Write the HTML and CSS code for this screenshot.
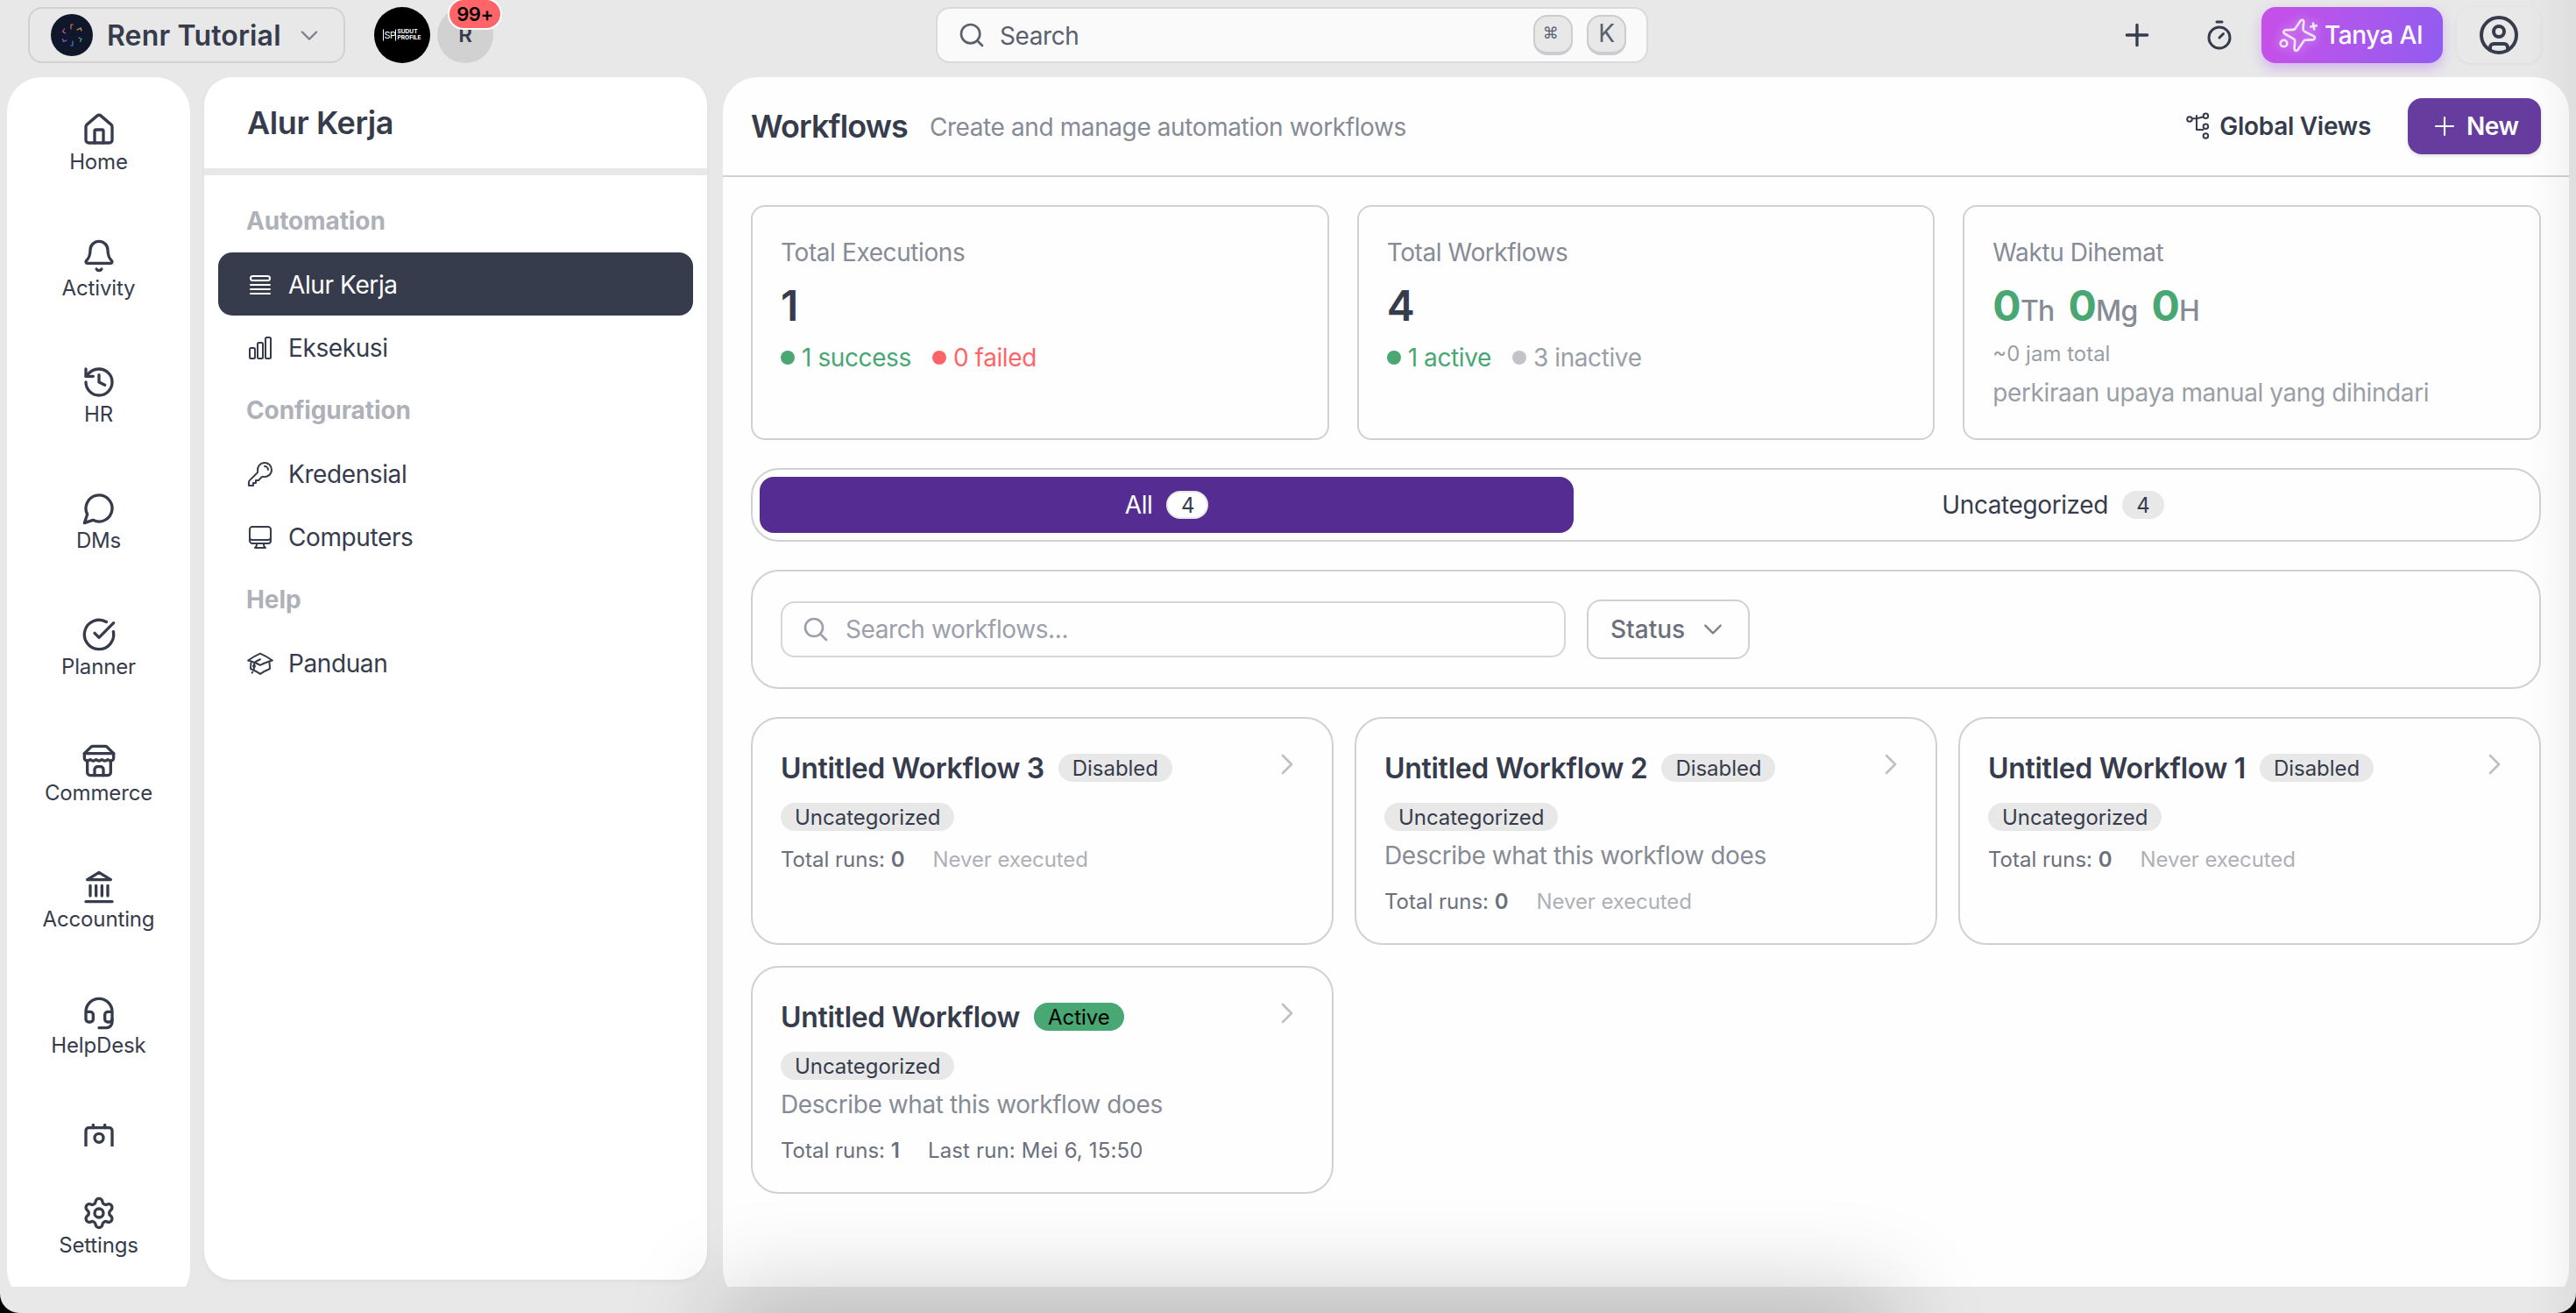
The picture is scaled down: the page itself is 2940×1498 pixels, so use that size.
FILE: index.html
```html
<!DOCTYPE html>
<html lang="id">
  <head>
    <meta charset="utf-8" />
    <meta name="viewport" content="width=device-width, initial-scale=1" />
    <title>Workflows</title>
    <link rel="stylesheet" href="styles.css" />
  </head>
  <body>
    <div class="app">
      <header class="topbar">
        <div class="topbar-left">
          <button type="button" class="workspace">
            <svg class="workspace-logo" viewBox="0 0 48 48">
              <circle cx="24" cy="24" r="24" fill="#10172a" stroke="none" />
              <g fill="none" stroke-width="1.2">
                <path d="M23 17v-5h2.500" stroke="#e0695a" />
                <path d="M30 18l4-2 1 3" stroke="#d9a93c" />
                <path d="M32 27l3 1.500-1.500 3" stroke="#4fae84" />
                <path d="M25 31v5h-2.500" stroke="#4c7fd0" />
                <path d="M18 30l-3.500 1.500-1-3" stroke="#7d68cf" />
                <path d="M16.500 22l-3-2 2-3" stroke="#c65a9b" />
              </g>
            </svg>
            <span class="workspace-name">Renr Tutorial</span>
            <svg class="chevron" viewBox="0 0 24 24"><path d="m5 9 7 7 7-7" /></svg>
          </button>
          <div class="avatars">
            <div class="avatar avatar-dark">
              <span class="sp-mark">SP</span>
              <span class="sp-text">SUDUT<br />PROFILE</span>
            </div>
            <div class="avatar avatar-grey">R<span class="notif">99+</span></div>
          </div>
        </div>

        <div class="global-search">
          <svg class="icon-32" viewBox="0 0 24 24"><circle cx="11" cy="11" r="8" /><path d="m21 21-4.300-4.300" /></svg>
          <span class="global-search-text">Search</span>
          <kbd class="key key-cmd">⌘</kbd>
          <kbd class="key">K</kbd>
        </div>

        <div class="topbar-right">
          <svg class="icon-40" viewBox="0 0 24 24"><path d="M5 12h14M12 5v14" /></svg>
          <svg class="icon-36 timer" viewBox="0 0 24 24"><path d="M10 2h4M12 14l3-3" /><circle cx="12" cy="14" r="8" /></svg>
          <button type="button" class="ask-ai">
            <svg class="sparkle" viewBox="0 0 44 38">
              <path d="M24 3.500c1-2.600 4.400-2.200 4.200.6l-.7 8c0 1 .5 2 1.500 2.700l10.500 5.400c2.300 1.300 1.600 4.100-1 4.200l-8 .2c-1.200 0-2 .6-2.500 1.600l-6.500 9.500c-1.500 2-4 1.200-3.900-1.300l.6-8.500c0-1-.5-2-1.400-2.500L6.500 17.500c-2-1.300-1.400-4 1-4.200l9-.4c1 0 1.800-.6 2.200-1.500z" />
              <circle cx="5.500" cy="28.500" r="3.800" />
              <path d="M39 5.500l1.200 6.800M36.200 9.600l6.800-1.400" />
            </svg>
            Tanya AI
          </button>
          <button type="button" class="profile">
            <svg class="icon-48" viewBox="0 0 24 24"><circle cx="12" cy="12" r="10" /><circle cx="12" cy="10" r="3" /><path d="M7 20.662V19a2 2 0 0 1 2-2h6a2 2 0 0 1 2 2v1.662" /></svg>
          </button>
        </div>
      </header>

      <div class="columns">
        <nav class="rail">
          <div class="rail-scroll">
            <a class="rail-item">
              <svg class="icon-40" viewBox="0 0 24 24"><path d="M15 21v-8a1 1 0 0 0-1-1h-4a1 1 0 0 0-1 1v8" /><path d="M3 10a2 2 0 0 1 .709-1.528l7-6a2 2 0 0 1 2.582 0l7 6A2 2 0 0 1 21 10v9a2 2 0 0 1-2 2H5a2 2 0 0 1-2-2z" /></svg>
              <span>Home</span>
            </a>
            <a class="rail-item">
              <svg class="icon-40" viewBox="0 0 24 24"><path d="M10.268 21a2 2 0 0 0 3.464 0" /><path d="M3.262 15.326A1 1 0 0 0 4 17h16a1 1 0 0 0 .74-1.673C19.410 13.956 18 12.499 18 8A6 6 0 0 0 6 8c0 4.499-1.411 5.956-2.738 7.326" /></svg>
              <span>Activity</span>
            </a>
            <a class="rail-item">
              <svg class="icon-40" viewBox="0 0 24 24"><path d="M3 12a9 9 0 1 0 9-9 9.750 9.750 0 0 0-6.740 2.740L3 8" /><path d="M3 3v5h5" /><path d="M12 7v5l4 2" /></svg>
              <span>HR</span>
            </a>
            <a class="rail-item">
              <svg class="icon-40" viewBox="0 0 24 24"><path d="M7.900 20A9 9 0 1 0 4 16.100L2 22Z" /></svg>
              <span>DMs</span>
            </a>
            <a class="rail-item">
              <svg class="icon-40" viewBox="0 0 24 24"><path d="M21.801 10A10 10 0 1 1 17 3.335" /><path d="m9 11 3 3L22 4" /></svg>
              <span>Planner</span>
            </a>
            <a class="rail-item">
              <svg class="icon-40" viewBox="0 0 24 24"><path d="m2 7 4.410-4.410A2 2 0 0 1 7.830 2h8.340a2 2 0 0 1 1.420.590L22 7" /><path d="M4 12v8a2 2 0 0 0 2 2h12a2 2 0 0 0 2-2v-8" /><path d="M15 22v-4a2 2 0 0 0-2-2h-2a2 2 0 0 0-2 2v4" /><path d="M2 7h20" /><path d="M22 7v3a2 2 0 0 1-2 2a2.700 2.700 0 0 1-1.590-.63.700.700 0 0 0-.82 0A2.700 2.700 0 0 1 16 12a2.700 2.700 0 0 1-1.590-.63.700.700 0 0 0-.82 0A2.700 2.700 0 0 1 12 12a2.700 2.700 0 0 1-1.590-.63.700.700 0 0 0-.82 0A2.700 2.700 0 0 1 8 12a2.700 2.700 0 0 1-1.590-.63.700.700 0 0 0-.82 0A2.700 2.700 0 0 1 4 12a2 2 0 0 1-2-2V7" /></svg>
              <span>Commerce</span>
            </a>
            <a class="rail-item">
              <svg class="icon-40" viewBox="0 0 24 24"><path d="M3 22h18M6 18v-7M10 18v-7M14 18v-7M18 18v-7M12 2l8 5H4z" /></svg>
              <span>Accounting</span>
            </a>
            <a class="rail-item">
              <svg class="icon-40" viewBox="0 0 24 24"><path d="M3 11h3a2 2 0 0 1 2 2v3a2 2 0 0 1-2 2H5a2 2 0 0 1-2-2v-5Zm0 0a9 9 0 1 1 18 0m0 0v5a2 2 0 0 1-2 2h-1a2 2 0 0 1-2-2v-3a2 2 0 0 1 2-2h3Z" /><path d="M21 16v2a4 4 0 0 1-4 4h-5" /></svg>
              <span>HelpDesk</span>
            </a>
            <a class="rail-item">
              <svg class="icon-40" viewBox="0 0 24 24"><path d="M16 2v2M8 2v2M7 22v-2a2 2 0 0 1 2-2h6a2 2 0 0 1 2 2v2" /><circle cx="12" cy="11" r="3" /><rect x="3" y="4" width="18" height="18" rx="2" /></svg>
            </a>
          </div>
          <a class="rail-item rail-settings">
            <svg class="icon-40" viewBox="0 0 24 24"><path d="M9.671 4.136a2.340 2.340 0 0 1 4.659 0 2.340 2.340 0 0 0 3.319 1.915 2.340 2.340 0 0 1 2.330 4.033 2.340 2.340 0 0 0 0 3.831 2.340 2.340 0 0 1-2.330 4.033 2.340 2.340 0 0 0-3.319 1.915 2.340 2.340 0 0 1-4.659 0 2.340 2.340 0 0 0-3.320-1.915 2.340 2.340 0 0 1-2.330-4.033 2.340 2.340 0 0 0 0-3.831A2.340 2.340 0 0 1 6.350 6.051a2.340 2.340 0 0 0 3.319-1.915" /><circle cx="12" cy="12" r="3" /></svg>
            <span>Settings</span>
          </a>
        </nav>

        <aside class="panel">
          <h2 class="panel-title">Alur Kerja</h2>
          <div class="panel-nav">
            <div class="nav-heading">Automation</div>
            <a class="nav-item nav-active">
              <svg class="nav-icon" viewBox="0 0 24 24"><path d="M3.750 12h16.500m-16.500 3.750h16.500M3.750 19.500h16.500M5.625 4.500h12.750a1.875 1.875 0 0 1 0 3.750H5.625a1.875 1.875 0 0 1 0-3.750Z" /></svg>
              Alur Kerja
            </a>
            <a class="nav-item">
              <svg class="nav-icon" viewBox="0 0 24 24"><path d="M3 13.125C3 12.504 3.504 12 4.125 12h2.250c.621 0 1.125.504 1.125 1.125v6.750C7.500 20.496 6.996 21 6.375 21h-2.250A1.125 1.125 0 0 1 3 19.875v-6.750ZM9.750 8.625c0-.621.504-1.125 1.125-1.125h2.250c.621 0 1.125.504 1.125 1.125v11.250c0 .621-.504 1.125-1.125 1.125h-2.250a1.125 1.125 0 0 1-1.125-1.125V8.625ZM16.500 4.125c0-.621.504-1.125 1.125-1.125h2.250C20.496 3 21 3.504 21 4.125v15.750c0 .621-.504 1.125-1.125 1.125h-2.250a1.125 1.125 0 0 1-1.125-1.125V4.125Z" /></svg>
              Eksekusi
            </a>
            <div class="nav-heading">Configuration</div>
            <a class="nav-item">
              <svg class="nav-icon" viewBox="0 0 24 24"><path d="M15.750 5.250a3 3 0 0 1 3 3m3 0a6 6 0 0 1-7.029 5.912c-.563-.097-1.159.026-1.563.430L10.500 17.250H8.250v2.250H6v2.250H2.250v-2.818c0-.597.237-1.170.659-1.591l6.499-6.499c.404-.404.527-1 .430-1.563A6 6 0 1 1 21.750 8.250Z" /></svg>
              Kredensial
            </a>
            <a class="nav-item">
              <svg class="nav-icon" viewBox="0 0 24 24"><path d="M9 17.250v1.007a3 3 0 0 1-.879 2.122L7.500 21h9l-.621-.621A3 3 0 0 1 15 18.257V17.250m6-12V15a2.250 2.250 0 0 1-2.250 2.250H5.250A2.250 2.250 0 0 1 3 15V5.250m18 0A2.250 2.250 0 0 0 18.750 3H5.250A2.250 2.250 0 0 0 3 5.250m18 0V12a2.250 2.250 0 0 1-2.250 2.250H5.250A2.250 2.250 0 0 1 3 12V5.250" /></svg>
              Computers
            </a>
            <div class="nav-heading">Help</div>
            <a class="nav-item">
              <svg class="nav-icon" viewBox="0 0 24 24"><path d="M4.260 10.147a60.438 60.438 0 0 0-.491 6.347A48.620 48.620 0 0 1 12 20.904a48.620 48.620 0 0 1 8.232-4.410 60.460 60.460 0 0 0-.491-6.347m-15.482 0a50.636 50.636 0 0 0-2.658-.813A59.906 59.906 0 0 1 12 3.493a59.903 59.903 0 0 1 10.399 5.840c-.896.248-1.783.520-2.658.814m-15.482 0A50.717 50.717 0 0 1 12 13.489a50.702 50.702 0 0 1 7.740-3.342M6.750 15a.750.750 0 1 0 0-1.500.750.750 0 0 0 0 1.500Zm0 0v-3.675A55.378 55.378 0 0 1 12 8.443m-7.007 11.550A5.981 5.981 0 0 0 6.750 15.750v-1.500" /></svg>
              Panduan
            </a>
          </div>
        </aside>

        <main class="main">
          <div class="main-header">
            <h1 class="page-title">Workflows</h1>
            <p class="page-subtitle">Create and manage automation workflows</p>
            <button type="button" class="global-views">
              <svg class="tree-icon" viewBox="0 0 28 32">
                <circle cx="4" cy="8" r="2.800" /><circle cx="22.400" cy="4.300" r="2.800" /><circle cx="22.400" cy="16.300" r="2.800" /><circle cx="22.400" cy="27" r="2.800" />
                <path d="M7 7.300h5l7-1.800M12 4v16h7.500M12 7v8" />
              </svg>
              Global Views
            </button>
            <button type="button" class="new-button">
              <svg class="icon-32" viewBox="0 0 24 24"><path d="M12 4.500v15m7.500-7.500h-15" /></svg>
              New
            </button>
          </div>

          <div class="content">
            <section class="stats">
              <div class="stat">
                <div class="stat-label">Total Executions</div>
                <div class="stat-value">1</div>
                <div class="stat-row">
                  <span class="dot-label green">1 success</span>
                  <span class="dot-label red">0 failed</span>
                </div>
              </div>
              <div class="stat">
                <div class="stat-label">Total Workflows</div>
                <div class="stat-value">4</div>
                <div class="stat-row">
                  <span class="dot-label green">1 active</span>
                  <span class="dot-label grey">3 inactive</span>
                </div>
              </div>
              <div class="stat">
                <div class="stat-label">Waktu Dihemat</div>
                <div class="stat-value saved">
                  <span>0<small>Th</small></span>
                  <span>0<small>Mg</small></span>
                  <span>0<small>H</small></span>
                </div>
                <div class="stat-hours">~0 jam total</div>
                <div class="stat-note">perkiraan upaya manual yang dihindari</div>
              </div>
            </section>

            <div class="tabs">
              <button type="button" class="tab tab-active">All <span class="count">4</span></button>
              <button type="button" class="tab">Uncategorized <span class="count">4</span></button>
            </div>

            <div class="filters">
              <div class="filter-search">
                <svg class="icon-32" viewBox="0 0 24 24"><path d="m21 21-5.197-5.197m0 0A7.500 7.500 0 1 0 5.196 5.196a7.500 7.500 0 0 0 10.607 10.607Z" /></svg>
                Search workflows...
              </div>
              <button type="button" class="status">
                Status
                <svg class="chevron" viewBox="0 0 24 24"><path d="m4.500 8.250 7.500 7.500 7.500-7.500" /></svg>
              </button>
            </div>

            <section class="cards">
              <article class="card">
                <div class="card-head">
                  <h3>Untitled Workflow 3</h3>
                  <span class="badge">Disabled</span>
                  <svg class="card-arrow" viewBox="0 0 24 24"><path d="m8.250 4.500 7.500 7.500-7.500 7.500" /></svg>
                </div>
                <span class="badge">Uncategorized</span>
                <div class="runs"><span>Total runs: <b>0</b></span><span class="never">Never executed</span></div>
              </article>
              <article class="card">
                <div class="card-head">
                  <h3>Untitled Workflow 2</h3>
                  <span class="badge">Disabled</span>
                  <svg class="card-arrow" viewBox="0 0 24 24"><path d="m8.250 4.500 7.500 7.500-7.500 7.500" /></svg>
                </div>
                <span class="badge">Uncategorized</span>
                <p class="card-desc">Describe what this workflow does</p>
                <div class="runs"><span>Total runs: <b>0</b></span><span class="never">Never executed</span></div>
              </article>
              <article class="card">
                <div class="card-head">
                  <h3>Untitled Workflow 1</h3>
                  <span class="badge">Disabled</span>
                  <svg class="card-arrow" viewBox="0 0 24 24"><path d="m8.250 4.500 7.500 7.500-7.500 7.500" /></svg>
                </div>
                <span class="badge">Uncategorized</span>
                <div class="runs"><span>Total runs: <b>0</b></span><span class="never">Never executed</span></div>
              </article>
              <article class="card">
                <div class="card-head">
                  <h3>Untitled Workflow</h3>
                  <span class="badge badge-active">Active</span>
                  <svg class="card-arrow" viewBox="0 0 24 24"><path d="m8.250 4.500 7.500 7.500-7.500 7.500" /></svg>
                </div>
                <span class="badge">Uncategorized</span>
                <p class="card-desc">Describe what this workflow does</p>
                <div class="runs"><span>Total runs: <b>1</b></span><span class="last-run">Last run: Mei 6, 15:50</span></div>
              </article>
            </section>
          </div>
        </main>
      </div>
    </div>
  </body>
</html>
```

FILE: styles.css
```css
* {
  box-sizing: border-box;
}

html {
  background: #000;
}

body {
  margin: 0;
  font-family: Inter, "Liberation Sans", sans-serif;
  font-size: 28px;
  line-height: 40px;
  letter-spacing: -0.4px;
  color: #363c4c;
}

h1,
h2,
h3,
p {
  margin: 0;
}

button {
  font: inherit;
  letter-spacing: inherit;
  color: inherit;
  background: none;
  border: 0;
  padding: 0;
}

svg {
  display: block;
  flex: none;
  fill: none;
  stroke: currentColor;
  stroke-width: 2;
  stroke-linecap: round;
  stroke-linejoin: round;
}

.icon-32 {
  width: 32px;
  height: 32px;
}

.icon-36 {
  width: 36px;
  height: 36px;
}

.icon-40 {
  width: 40px;
  height: 40px;
}

.icon-48 {
  width: 48px;
  height: 48px;
}

.app {
  position: relative;
  display: flex;
  flex-direction: column;
  height: 1498px;
  overflow: hidden;
  background: #e8e8e8;
  border-radius: 0 0 22px 22px;
}

/* soft shade along the bottom and right edge of the window */
.app::before {
  content: "";
  position: absolute;
  z-index: 2;
  left: 840px;
  right: 800px;
  top: 100%;
  height: 60px;
  box-shadow: 0 0 110px 20px rgba(0, 0, 0, 0.22);
}

.app::after {
  content: "";
  position: absolute;
  z-index: 2;
  top: 0;
  right: 0;
  bottom: 0;
  width: 56px;
  background: linear-gradient(to right, rgba(0, 0, 0, 0), rgba(0, 0, 0, 0.045));
}

/* top bar */
.topbar {
  display: flex;
  align-items: flex-start;
  height: 88px;
  padding: 8px 40px 0 32px;
}

.topbar-left {
  display: flex;
  width: 1036px;
}

.workspace {
  display: flex;
  align-items: center;
  width: 362px;
  height: 64px;
  padding-left: 24px;
  border: 2px solid #d1d1d1;
  border-radius: 16px;
}

.workspace-logo {
  width: 48px;
  height: 48px;
}

.workspace-name {
  width: 205px;
  margin-left: 16px;
  padding-top: 1px;
  font-size: 32px;
  font-weight: 600;
  letter-spacing: 0.15px;
  text-align: left;
  white-space: nowrap;
}

.chevron {
  width: 28px;
  height: 28px;
  color: #7d828d;
}

.workspace .chevron {
  margin-left: 12px;
}

.avatars {
  display: flex;
  gap: 8px;
  margin-left: 33px;
}

.avatar {
  position: relative;
  display: flex;
  align-items: center;
  justify-content: center;
  width: 64px;
  height: 64px;
  border-radius: 50%;
}

.avatar-dark {
  gap: 1px;
  background: #000;
  color: #fff;
}

.sp-mark {
  border: 1px solid #fff;
  border-top-color: transparent;
  border-bottom-color: transparent;
  font-size: 11px;
  line-height: 12px;
  letter-spacing: -0.5px;
}

.sp-text {
  font-size: 6.6px;
  font-weight: 700;
  line-height: 7px;
  letter-spacing: 0;
}

.avatar-grey {
  background: #d1d1d1;
  font-size: 24px;
  font-weight: 600;
}

.notif {
  position: absolute;
  left: 12px;
  top: -10px;
  width: 62px;
  height: 36px;
  border: 2px solid #fff;
  border-radius: 18px;
  background: #ff6568;
  color: #000;
  font-size: 22px;
  line-height: 32px;
  text-align: center;
}

.global-search {
  display: flex;
  align-items: center;
  width: 813px;
  height: 64px;
  padding: 0 23px;
  border: 2px solid #d9d9de;
  border-radius: 16px;
  background: #fafafa;
  color: #5a606d;
}

.global-search-text {
  flex: 1;
  margin-left: 16px;
  padding-top: 1px;
}

.key {
  width: 45px;
  height: 46px;
  margin-left: 16px;
  border: 2px solid #cbccce;
  border-bottom-width: 4px;
  border-radius: 16px;
  background: #e8e8e8;
  font-family: inherit;
  font-size: 28px;
  line-height: 38px;
  text-align: center;
}

.key-cmd {
  padding-right: 6px;
  font-family: "DejaVu Sans", sans-serif;
  font-size: 18px;
}

.topbar-right {
  display: flex;
  align-items: center;
  height: 64px;
  margin-left: auto;
}

.timer {
  margin-left: 56px;
}

.ask-ai {
  display: flex;
  align-items: center;
  gap: 8px;
  width: 207px;
  height: 64px;
  margin-left: 30px;
  padding-left: 20px;
  border-radius: 16px;
  background: linear-gradient(100deg, #c84fe8, #ad57ec 50%, #925cf0);
  box-shadow: 0 6px 14px rgba(168, 85, 247, 0.35);
  color: #fff;
  font-weight: 500;
  white-space: nowrap;
}

.sparkle {
  width: 44px;
  height: 38px;
  stroke-width: 2.6;
  opacity: 0.85;
  filter: drop-shadow(0 0 6px rgba(255, 255, 255, 0.6));
}

.profile {
  display: flex;
  align-items: center;
  justify-content: center;
  width: 96px;
  height: 64px;
  margin-left: 16px;
  border-radius: 16px;
  box-shadow: 0 1px 4px rgba(0, 0, 0, 0.06);
}

/* columns */
.columns {
  display: flex;
  align-items: flex-start;
  height: 1380px;
  padding: 0 8px;
  overflow: hidden;
}

.rail {
  flex: none;
  width: 209px;
  height: 1400px;
  border-radius: 40px;
  background: #fff;
}

.rail-scroll {
  height: 1220px;
  overflow: hidden;
}

.rail-item {
  display: flex;
  flex-direction: column;
  align-items: center;
  height: 144px;
  padding-top: 40px;
  font-size: 24px;
  line-height: 32px;
  letter-spacing: -0.15px;
}

.rail-item span {
  margin-top: 1px;
}

.rail-settings {
  padding-top: 56px;
}

.panel {
  flex: none;
  width: 574px;
  height: 1372px;
  margin-left: 16px;
  border-radius: 32px;
  background: #fff;
  box-shadow: 0 2px 6px rgba(0, 0, 0, 0.05);
}

.panel-title {
  height: 112px;
  padding: 28px 48px 0 49px;
  border-bottom: 8px solid #e8e8e8;
  font-size: 36px;
  font-weight: 600;
  line-height: 48px;
}

.panel-nav {
  padding: 16px;
}

.nav-heading {
  height: 72px;
  padding-left: 32px;
  color: #aeb1b8;
  font-weight: 700;
  line-height: 73px;
  letter-spacing: -0.1px;
}

.nav-item {
  display: flex;
  align-items: center;
  gap: 16px;
  height: 72px;
  padding: 1px 0 0 32px;
  border-radius: 16px;
}

.nav-active {
  background: #363c4c;
  color: #fff;
}

.nav-icon {
  width: 32px;
  height: 32px;
  stroke-width: 1.5;
}

.main {
  flex: 1;
  height: 1400px;
  margin-left: 18px;
  border-radius: 40px;
  background: #fefefe;
}

.main-header {
  display: flex;
  align-items: center;
  height: 114px;
  padding: 0 32px;
  border-bottom: 2px solid #d1d1d1;
}

.page-title {
  font-size: 36px;
  font-weight: 600;
  letter-spacing: -0.9px;
}

.page-subtitle {
  margin-left: 25px;
  padding-top: 1px;
  color: #868b95;
}

.global-views {
  display: flex;
  align-items: center;
  gap: 10px;
  margin-left: auto;
  font-weight: 600;
  letter-spacing: -0.3px;
}

.tree-icon {
  width: 28px;
  height: 32px;
}

.new-button {
  display: flex;
  align-items: center;
  gap: 9px;
  width: 152px;
  height: 64px;
  margin-left: 42px;
  padding-left: 26px;
  border-radius: 16px;
  background: #663c9f;
  box-shadow: 0 2px 4px rgba(0, 0, 0, 0.12);
  color: #fff;
  font-weight: 600;
}

.new-button svg {
  stroke-width: 1.6;
}

.content {
  display: flex;
  flex-direction: column;
  gap: 32px;
  padding: 32px;
}

/* stats */
.stats {
  display: grid;
  grid-template-columns: repeat(3, 1fr);
  gap: 32px;
}

.stat {
  height: 268px;
  padding: 32px;
  border: 2px solid #d1d1d1;
  border-radius: 16px;
}

.stat-label {
  color: #868b95;
}

.stat-value {
  height: 64px;
  margin: 8px 0;
  font-size: 48px;
  font-weight: 600;
  line-height: 66px;
}

.stat-row {
  display: flex;
  gap: 24px;
}

.dot-label {
  display: flex;
  align-items: center;
  gap: 8px;
}

.dot-label::before {
  content: "";
  width: 16px;
  height: 16px;
  border-radius: 50%;
  background: currentColor;
}

.green {
  color: #48a772;
}

.red {
  color: #ff6568;
}

.grey {
  color: #9a9ea6;
}

.grey::before {
  background: #c3c4c9;
}

.saved {
  display: flex;
  gap: 16px;
  color: #48a772;
  font-weight: 700;
  letter-spacing: -0.8px;
}

.saved small {
  color: #868b95;
  font-size: 32px;
  font-weight: 500;
  line-height: 1;
}

.stat-hours {
  color: #9a9ea6;
  font-size: 24px;
  line-height: 32px;
  letter-spacing: 0;
}

.stat-note {
  margin-top: 8px;
  color: #9a9ea6;
}

/* tabs */
.tabs {
  display: flex;
  height: 84px;
  padding: 8px;
  border: 2px solid #d1d1d1;
  border-radius: 32px;
}

.tab {
  display: flex;
  align-items: center;
  justify-content: center;
  gap: 16px;
  flex: 1130 0 0;
  height: 64px;
  border-radius: 16px;
}

.tab-active {
  flex-grow: 960;
  background: #552c91;
  color: #fff;
}

.count {
  width: 48px;
  height: 32px;
  border-radius: 16px;
  background: #e8e8e8;
  color: #363c4c;
  font-size: 24px;
  line-height: 33px;
}

.tab-active .count {
  border: 2px solid #e8e8e8;
  background: #fff;
  line-height: 29px;
}

/* filters */
.filters {
  display: flex;
  align-items: center;
  gap: 24px;
  height: 136px;
  padding: 0 32px;
  border: 2px solid #d1d1d1;
  border-radius: 32px;
}

.filter-search {
  display: flex;
  align-items: center;
  gap: 18px;
  width: 896px;
  height: 64px;
  padding-left: 22px;
  border: 2px solid #d5d6dd;
  border-radius: 16px;
  color: #9ca0ab;
}

.status {
  display: flex;
  align-items: center;
  gap: 18px;
  width: 186px;
  height: 68px;
  padding-left: 25px;
  border: 2px solid #d1d1d1;
  border-radius: 16px;
  color: #6b707c;
  font-weight: 500;
  letter-spacing: 0;
}

/* workflow cards */
.cards {
  display: grid;
  grid-template-columns: repeat(3, 1fr);
  gap: 24px;
}

.card {
  height: 260px;
  padding: 32px;
  border: 2px solid #d1d1d1;
  border-radius: 32px;
}

.card-head {
  display: flex;
  align-items: center;
  gap: 16px;
  height: 48px;
  margin-bottom: 16px;
}

.card h3 {
  padding-top: 2px;
  font-size: 32px;
  font-weight: 600;
  line-height: 48px;
  letter-spacing: -0.3px;
}

.badge {
  display: block;
  width: fit-content;
  height: 32px;
  padding: 0 16px;
  border-radius: 16px;
  background: #e8e8e8;
  font-size: 24px;
  line-height: 34px;
  letter-spacing: -0.05px;
}

.badge-active {
  background: #48a772;
  color: #000;
}

.card-arrow {
  width: 32px;
  height: 32px;
  margin: -8px 3px 0 auto;
  color: #bfc0c6;
}

.card-desc {
  margin-top: 8px;
  color: #868b95;
}

.runs {
  display: flex;
  gap: 32px;
  margin-top: 17px;
  color: #6b707c;
  font-size: 24px;
  line-height: 32px;
  letter-spacing: 0;
}

.runs b {
  font-weight: 600;
}

.never {
  color: #aeb1b8;
  letter-spacing: -0.1px;
}

.last-run {
  letter-spacing: 0.15px;
}
```
